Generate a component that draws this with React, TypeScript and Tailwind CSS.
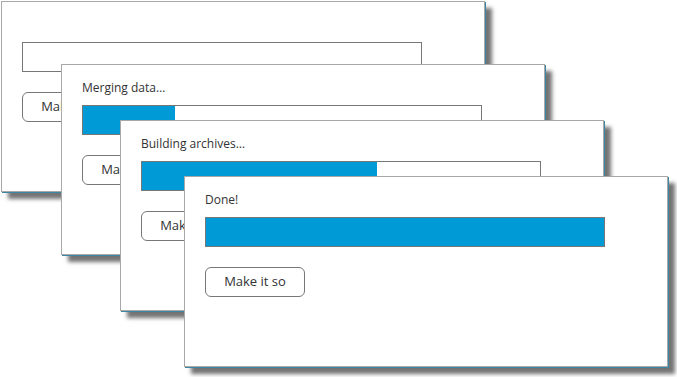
interface ProgressWindowProps {
  label: string;
  progress: number;
  showBar: boolean;
  className: string;
}

function ProgressWindow({ label, progress, showBar, className }: ProgressWindowProps) {
  return (
    <div
      className={`absolute w-[484px] h-[191px] bg-white border border-[#a8a8a8] shadow-[1px_1px_0_#3a87a3,7px_7px_4px_rgba(0,0,0,0.55)] pl-[20px] pt-[15px] flex flex-col items-start ${className}`}
    >
      <div className="h-[16px] text-[12px] leading-[16px] text-[#333]">{label}</div>
      <div className="mt-[9px] w-[400px] h-[30px] border border-[#777] bg-white">
        {showBar && <div className="h-full bg-[#009bd6]" style={{ width: `${progress}%` }} />}
      </div>
      <button className="mt-[20px] w-[100px] h-[30px] border border-[#777] rounded-[6px] bg-white text-[13px] text-[#333]">
        Make it so
      </button>
    </div>
  );
}

export default function App() {
  return (
    <div className="relative w-[677px] h-[377px] bg-white overflow-hidden font-['Open_Sans',sans-serif]">
      <ProgressWindow label="" progress={0} showBar={false} className="left-[1px] top-[1px]" />
      <ProgressWindow label="Merging data…" progress={23} showBar className="left-[61px] top-[64px]" />
      <ProgressWindow label="Building archives…" progress={59} showBar className="left-[120px] top-[120px]" />
      <ProgressWindow label="Done!" progress={100} showBar className="left-[184px] top-[176px]" />
    </div>
  );
}
